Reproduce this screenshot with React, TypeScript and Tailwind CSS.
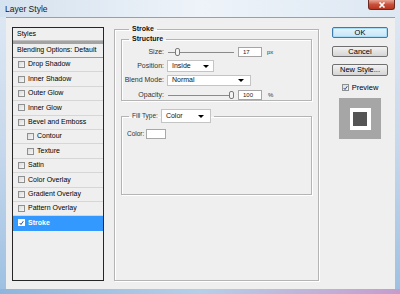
import React from "react";

const font = { fontFamily: '"Liberation Sans", Arial, sans-serif' };

interface StyleItem {
  label: string;
  checked?: boolean;
  indent?: boolean;
  selected?: boolean;
}

const items: StyleItem[] = [
  { label: "Drop Shadow" },
  { label: "Inner Shadow" },
  { label: "Outer Glow" },
  { label: "Inner Glow" },
  { label: "Bevel and Emboss" },
  { label: "Contour", indent: true },
  { label: "Texture", indent: true },
  { label: "Satin" },
  { label: "Color Overlay" },
  { label: "Gradient Overlay" },
  { label: "Pattern Overlay" },
  { label: "Stroke", checked: true, selected: true },
];

const Check: React.FC<{ checked?: boolean; light?: boolean }> = ({ checked, light }) => (
  <div
    className={`w-[7px] h-[7px] shrink-0 border flex items-center justify-center ${
      light ? "border-white bg-white" : "border-[#8e8f8f] bg-gradient-to-br from-[#dcdcdc] to-[#f7f7f7]"
    }`}
  >
    {checked && (
      <svg width="6" height="6" viewBox="0 0 6 6">
        <path d="M0.8 3 L2.4 4.8 L5.2 0.8" stroke="#2a4f9b" strokeWidth="1.2" fill="none" />
      </svg>
    )}
  </div>
);

const Arrow: React.FC = () => (
  <div className="w-0 h-0 border-l-[3px] border-r-[3px] border-t-[3px] border-l-transparent border-r-transparent border-t-black" />
);

const Slider: React.FC<{ pos: number }> = ({ pos }) => (
  <div className="relative w-[66px] h-[10px] flex items-center">
    <div className="w-full h-[1px] bg-[#8a8a8a]" />
    <div
      className="absolute top-[1px] w-[5px] h-[8px] rounded-[2px] border border-[#7a7a7a] bg-[#f4f4f4]"
      style={{ left: pos }}
    />
  </div>
);

const Input: React.FC<{ value: string }> = ({ value }) => (
  <div className="w-[24px] h-[10px] bg-white border border-[#a5a5a5] flex items-center pl-[4px] text-[6px] text-[#222]">
    {value}
  </div>
);

const Button: React.FC<{ label: string; primary?: boolean }> = ({ label, primary }) => (
  <div
    className={`w-[56px] h-[11px] rounded-[2px] flex items-center justify-center text-[7.5px] text-black border ${
      primary
        ? "border-[#3d7bad] bg-gradient-to-b from-[#e5f4fc] to-[#c4e5f6] shadow-[inset_0_0_0_1px_#a9dcf6]"
        : "border-[#707070] bg-gradient-to-b from-[#f2f2f2] to-[#d5d5d5]"
    }`}
  >
    {label}
  </div>
);

export default function App() {
  return (
    <div
      className="w-[400px] h-[294px] overflow-hidden flex flex-col bg-gradient-to-b from-[#dfe9f4] via-[#c6d8ec] to-[#9cc0e2]"
      style={font}
    >
      {/* Title bar */}
      <div className="h-[17px] flex justify-between shrink-0 bg-gradient-to-r from-[#d5e2ef] via-[#eef3f9] to-[#dde8f3]">
        <div className="pl-[5px] pt-[3px] text-[8.5px] text-[#1a1a1a]">Layer Style</div>
        <div className="mr-[5px] w-[27px] h-[10px] rounded-b-[3px] border border-t-0 border-[#6b2a20] bg-gradient-to-b from-[#e8a493] via-[#c8503a] to-[#b6351f] flex items-center justify-center">
          <svg width="8" height="6" viewBox="0 0 8 6">
            <path d="M1.5 0.5 L6.5 5.5 M6.5 0.5 L1.5 5.5" stroke="#fff" strokeWidth="1.6" />
          </svg>
        </div>
      </div>

      {/* Client area */}
      <div className="ml-[6px] mr-[5px] h-[272px] shrink-0 bg-[#efefef] border-t border-[#8da2b8] flex pt-[7px] pl-[6px]">
        {/* Styles list */}
        <div className="mt-[2px] w-[92px] h-[254px] border border-[#262626] bg-[#efefef] flex flex-col text-[7px] text-black">
          <div className="h-[13px] flex items-center pl-[4px] border-b border-[#c0c0c0]">Styles</div>
          <div className="h-[3px] bg-[#a3a3a3]" />
          <div className="h-[14px] flex items-center pl-[4px] border-b border-[#9c9c9c]">Blending Options: Default</div>
          {items.map((it) => (
            <div
              key={it.label}
              className={`h-[14.4px] flex items-center gap-[3px] border-b ${
                it.selected
                  ? "bg-[#3399ff] text-white font-bold border-[#3399ff]"
                  : "border-[#d6d6d6]"
              } ${it.indent ? "pl-[14px]" : "pl-[5px]"}`}
            >
              <Check checked={it.checked} light={it.selected} />
              <span>{it.label}</span>
            </div>
          ))}
        </div>

        {/* Stroke panel */}
        <fieldset className="ml-[10px] w-[203px] h-[256px] border border-[#b4b4b4] shadow-[inset_1px_1px_0_#fff,1px_1px_0_#fff] px-[6px] pb-0 text-[7px]">
          <legend className="ml-[8px] px-[3px] font-bold text-[7px] leading-[8px] text-[#111]">Stroke</legend>

          <fieldset className="mt-[2px] w-[191px] h-[66px] border border-[#b4b4b4] shadow-[inset_1px_1px_0_#fff,1px_1px_0_#fff] text-[#333]">
            <legend className="ml-[7px] px-[3px] font-bold leading-[8px] text-[#111]">Structure</legend>
            <div className="flex flex-col pt-[2px]">
              <div className="h-[14px] flex items-center">
                <span className="w-[42px] text-right">Size:</span>
                <div className="ml-[4px]">
                  <Slider pos={7} />
                </div>
                <div className="ml-[4px]">
                  <Input value="17" />
                </div>
                <span className="ml-[5px] text-[6px]">px</span>
              </div>
              <div className="h-[14px] flex items-center">
                <span className="w-[42px] text-right">Position:</span>
                <div className="ml-[3px] w-[47px] h-[12px] bg-white border border-[#c4c4c4] flex items-center justify-between pl-[4px] pr-[4px] text-[#111]">
                  <span>Inside</span>
                  <Arrow />
                </div>
              </div>
              <div className="h-[15px] flex items-center">
                <span className="w-[42px] text-right">Blend Mode:</span>
                <div className="ml-[3px] w-[84px] h-[11px] bg-white border border-[#c4c4c4] flex items-center justify-between pl-[4px] pr-[6px] text-[#111]">
                  <span>Normal</span>
                  <Arrow />
                </div>
              </div>
              <div className="h-[14px] flex items-center">
                <span className="w-[42px] text-right">Opacity:</span>
                <div className="ml-[4px]">
                  <Slider pos={61} />
                </div>
                <div className="ml-[4px]">
                  <Input value="100" />
                </div>
                <span className="ml-[6px] text-[6px]">%</span>
              </div>
            </div>
          </fieldset>

          <fieldset className="mt-[8px] w-[191px] h-[86px] border border-[#b4b4b4] shadow-[inset_1px_1px_0_#fff,1px_1px_0_#fff] text-[#333]">
            <legend className="ml-[7px] px-[3px] flex items-center gap-[3px]">
              <span className="text-[6.5px]">Fill Type:</span>
              <div className="w-[50px] h-[14px] bg-white border border-[#c4c4c4] flex items-center justify-between pl-[4px] pr-[6px] text-[#111]">
                <span>Color</span>
                <Arrow />
              </div>
            </legend>
            <div className="flex items-center pl-[5px] pt-[6px]">
              <span className="text-[6.5px]">Color:</span>
              <div className="ml-[2px] w-[20px] h-[10px] bg-white border border-[#a8a8a8]" />
            </div>
          </fieldset>
        </fieldset>

        {/* Buttons */}
        <div className="ml-[13px] mt-[2px] w-[56px] flex flex-col items-center">
          <Button label="OK" primary />
          <div className="mt-[8px]">
            <Button label="Cancel" />
          </div>
          <div className="mt-[7px] w-[56px] h-[12px] rounded-[2px] border border-[#707070] bg-gradient-to-b from-[#f2f2f2] to-[#d5d5d5] flex items-center justify-center text-[7.5px]">
            New Style...
          </div>
          <div className="mt-[6px] flex items-center gap-[3px] text-[7.5px]">
            <Check checked />
            <span>Preview</span>
          </div>
          <div className="mt-[5px] w-[42px] h-[41px] bg-[#a6a6a6] flex items-center justify-center">
            <div className="w-[21px] h-[22px] bg-white flex items-center justify-center">
              <div className="w-[14px] h-[14px] bg-[#555555]" />
            </div>
          </div>
        </div>
      </div>

      {/* Bottom frame */}
      <div className="flex-1 bg-gradient-to-r from-[#8fb5dc] via-[#b5cfe8] to-[#c59ccc]" />
    </div>
  );
}
